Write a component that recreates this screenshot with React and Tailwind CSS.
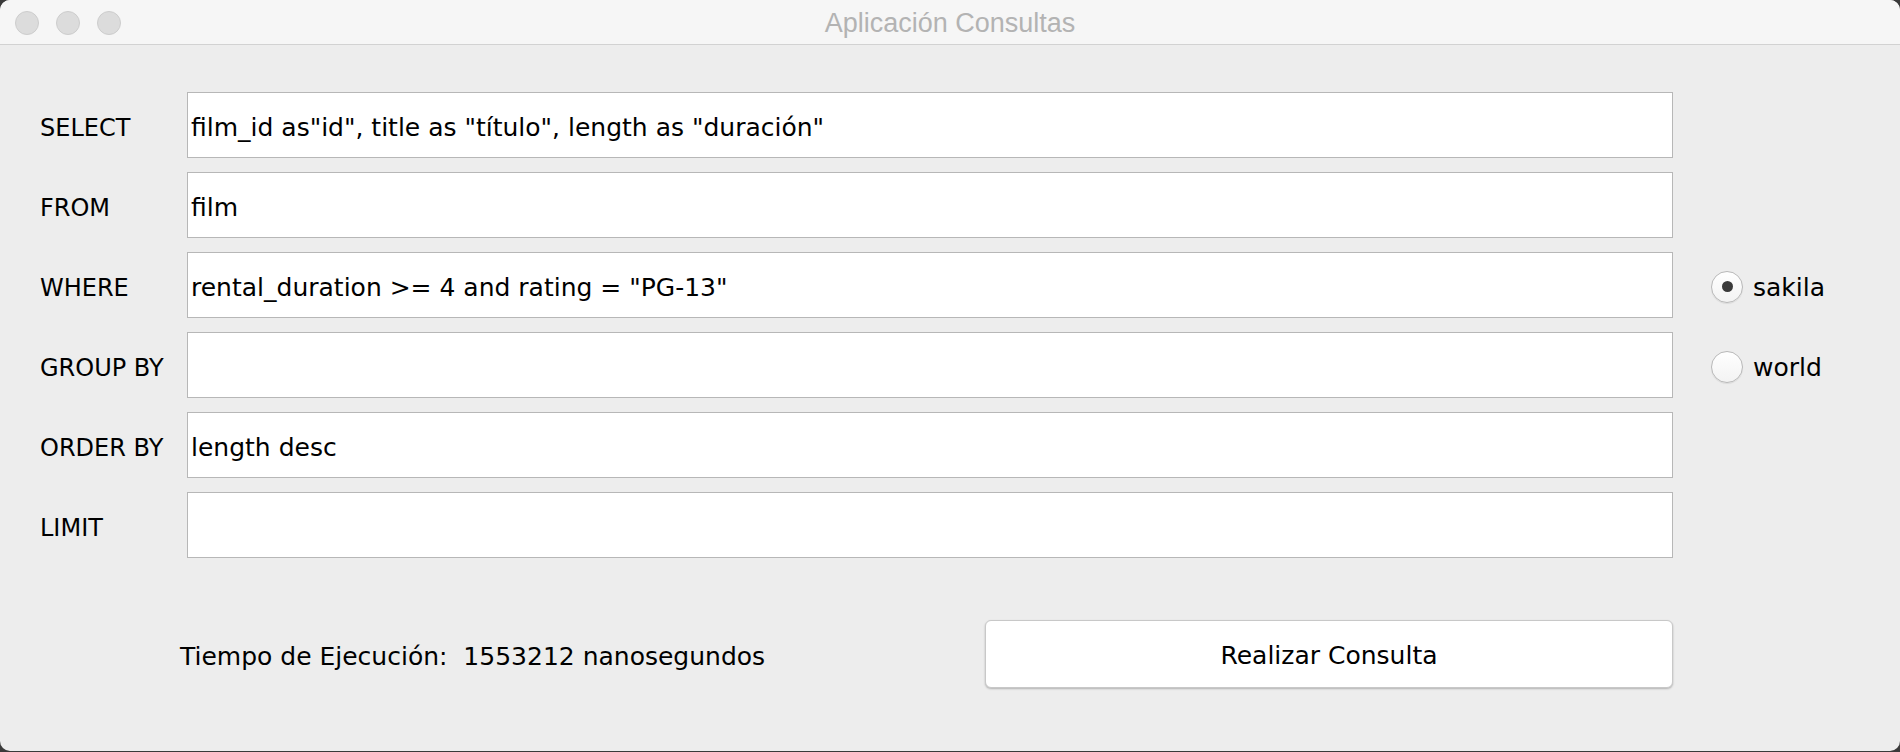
import React from "react";

const rows = [
  { label: "SELECT", value: 'film_id as"id", title as "título", length as "duración"' },
  { label: "FROM", value: "film" },
  { label: "WHERE", value: 'rental_duration >= 4 and rating = "PG-13"', radio: { name: "sakila", checked: true } },
  { label: "GROUP BY", value: "", radio: { name: "world", checked: false } },
  { label: "ORDER BY", value: "length desc" },
  { label: "LIMIT", value: "" },
];

const Radio = ({ name, checked }) => (
  <div className="flex items-center ml-[38px] pt-[3px]">
    <div className="w-[32px] h-[32px] rounded-full border border-[#b9b9b9] bg-gradient-to-b from-white to-[#f3f3f3] shadow-[0_1px_1px_rgba(0,0,0,0.08)] flex items-center justify-center">
      {checked && <div className="w-[11px] h-[11px] rounded-full bg-[#3a3a3a]" />}
    </div>
    <span className="ml-[10px] text-[25px] text-black pt-[2px]">{name}</span>
  </div>
);

const App = () => {
  return (
    <div className="w-[1900px] h-[752px] bg-[#3a3a3a] font-['DejaVu_Sans',sans-serif]">
      <div className="w-full h-[751px] bg-[#ededed] rounded-[10px] overflow-hidden flex flex-col">
        <div className="relative h-[45px] bg-[#f6f6f6] border-b border-[#d2d2d2] flex items-center justify-center shrink-0">
          <div className="absolute left-[15px] top-[11px] flex gap-[17px]">
            <div className="w-[24px] h-[24px] rounded-full bg-[#dcdcdc] border border-[#cdcdcd]" />
            <div className="w-[24px] h-[24px] rounded-full bg-[#dcdcdc] border border-[#cdcdcd]" />
            <div className="w-[24px] h-[24px] rounded-full bg-[#dcdcdc] border border-[#cdcdcd]" />
          </div>
          <span className="text-[27px] text-[#b3b3b3] font-['Liberation_Sans',sans-serif] pt-[2px]">
            Aplicación Consultas
          </span>
        </div>

        <div className="px-[40px] pt-[47px] flex flex-col gap-[14px]">
          {rows.map((r) => (
            <div key={r.label} className="flex items-center h-[66px]">
              <div className="w-[147px] text-[24px] text-black pt-[6px]">{r.label}</div>
              <div className="w-[1486px] h-[66px] bg-white border border-[#b7b7b7] flex items-center px-[3px] pt-[6px] text-[25px] text-black whitespace-pre">
                {r.value}
              </div>
              {r.radio && <Radio {...r.radio} />}
            </div>
          ))}
        </div>

        <div className="flex items-center mt-[62px] pl-[180px] h-[68px]">
          <div className="w-[805px] text-[25px] text-black whitespace-pre pt-[6px]">
            {"Tiempo de Ejecución:  1553212 nanosegundos"}
          </div>
          <button className="w-[688px] h-[68px] bg-white rounded-[6px] border border-[#c8c8c8] shadow-[0_1px_2px_rgba(0,0,0,0.25)] text-[25px] text-black pt-[4px]">
            Realizar Consulta
          </button>
        </div>
      </div>
    </div>
  );
};

export default App;
